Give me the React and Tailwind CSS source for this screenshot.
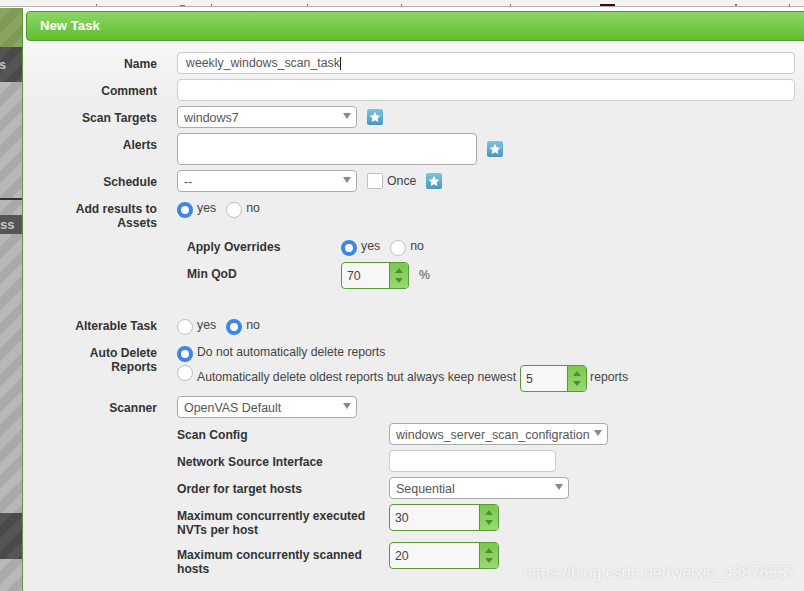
import React from 'react';

const font = { fontFamily: '"Liberation Sans", Arial, sans-serif' };

const hatchGray = 'bg-[repeating-linear-gradient(135deg,#b8b8b8_0px,#b8b8b8_9px,#aaaaaa_9px,#aaaaaa_18px)]';
const hatchDark = 'bg-[repeating-linear-gradient(135deg,#555555_0px,#555555_9px,#4a4a4a_9px,#4a4a4a_18px)]';

const Star = () => (
  <span className="flex h-4 w-4 shrink-0 items-center justify-center rounded-[2px] bg-gradient-to-b from-[#7cc5e2] to-[#4796c4]">
    <svg width="12" height="12" viewBox="0 0 24 24" fill="#ffffff">
      <path d="M12 1.5l3.3 6.9 7.5 1-5.5 5.2 1.4 7.5L12 18.4l-6.7 3.7 1.4-7.5L1.2 9.4l7.5-1z" />
    </svg>
  </span>
);

const Radio = ({ on }) => (
  on ? (
    <span className="block h-4 w-4 shrink-0 rounded-full border-[4.5px] border-[#3d86e6] bg-white" />
  ) : (
    <span className="block h-4 w-4 shrink-0 rounded-full border border-[#c4bfb8] bg-white" />
  )
);

const YesNo = ({ yes }) => (
  <div className="flex items-start text-[12.3px] leading-[18px] text-[#444]">
    <Radio on={yes} />
    <span className="ml-1 mt-[-3px]">yes</span>
    <span className="ml-[10px]"><Radio on={!yes} /></span>
    <span className="ml-1 mt-[-3px]">no</span>
  </div>
);

const Select = ({ value, width }) => (
  <div className={`flex h-[22px] items-center justify-between rounded-[4px] border border-[#aaaaaa] bg-white pl-[6px] pr-[5px] text-[12.45px] text-[#555] ${width}`}>
    <span className="pt-[2px]">{value}</span>
    <span className="mb-[2px] h-0 w-0 border-x-[4.5px] border-t-[6px] border-x-transparent border-t-[#888]" />
  </div>
);

const Spinner = ({ value, width }) => (
  <div className={`flex h-[27px] overflow-hidden rounded-[4px] border border-[#5a9a34] bg-[#f7f7f7] text-[12.3px] text-[#444] ${width}`}>
    <span className="flex flex-1 items-center pl-[5px] pt-[1px]">{value}</span>
    <div className="flex w-[19px] flex-col items-center justify-around border-l border-[#5a9a34] bg-gradient-to-b from-[#7ac850] to-[#9ad874] py-[3px]">
      <span className="h-0 w-0 border-x-[4px] border-b-[5px] border-x-transparent border-b-[#4f8f2d]" />
      <span className="h-0 w-0 border-x-[4px] border-t-[5px] border-x-transparent border-t-[#4f8f2d]" />
    </div>
  </div>
);

const Row = ({ label, children, className = 'mb-[5px]', labelClass = 'pt-[5px]' }) => (
  <div className={`flex ${className}`}>
    <div className={`w-[134px] shrink-0 pl-5 text-right text-[12.1px] font-bold leading-[14px] text-[#333] ${labelClass}`}>{label}</div>
    <div className="ml-5 flex-1">{children}</div>
  </div>
);

const SubRow = ({ label, children, labelClass = 'pt-[5px]' }) => (
  <div className="mb-[5px] flex">
    <div className={`w-[212px] shrink-0 pr-4 text-[12.1px] font-bold leading-[14px] text-[#333] ${labelClass}`}>{label}</div>
    <div>{children}</div>
  </div>
);

const App = () => {
  return (
    <div className="relative h-[591px] w-[804px] overflow-hidden bg-[#eeeeee]" style={font}>
      {/* browser strip above the dialog, text cut off */}
      <div className="flex h-[6px] items-end overflow-hidden bg-[#f5f4f2] pl-[96px]">
        <span className="h-[2px] w-[1px] bg-[#777]" />
        <span className="ml-[83px] h-[1px] w-[5px] bg-[#777]" />
        <span className="ml-[26px] h-[2px] w-[1px] bg-[#777]" />
        <span className="ml-[95px] h-[2px] w-[1px] bg-[#777]" />
        <span className="ml-[93px] h-[2px] w-[1px] bg-[#777]" />
        <span className="ml-[108px] h-[2px] w-[1px] bg-[#777]" />
        <span className="ml-[89px] h-[2px] w-[15px] bg-[#3a0a0a]" />
        <span className="ml-[120px] h-[2px] w-[2px] bg-[#777]" />
        <span className="ml-[52px] h-[2px] w-[1px] bg-[#777]" />
      </div>
      <div className="h-[1px] bg-[#b4b0ab]" />
      <div className="h-[1px] bg-white" />

      <div className="flex h-[583px]">
        {/* page behind the dialog */}
        <div className="flex w-[22px] shrink-0 flex-col text-[12px] font-bold text-[#c8c8c8]">
          <div className="h-[39px] bg-[repeating-linear-gradient(135deg,#8aa560_0px,#8aa560_9px,#7f9a56_9px,#7f9a56_18px)]" />
          <div className={`flex h-[35px] items-center justify-end overflow-hidden whitespace-nowrap pr-[16px] ${hatchDark}`}>s</div>
          <div className={`h-[116px] ${hatchGray}`} />
          <div className="h-[2px] bg-[#333]" />
          <div className={`h-[15px] ${hatchGray}`} />
          <div className="flex h-[19px] items-center overflow-hidden whitespace-pre bg-[#555] text-[13px]">ss  (</div>
          <div className={`h-[279px] ${hatchGray}`} />
          <div className={`h-[46px] ${hatchDark}`} />
          <div className={`flex-1 ${hatchGray}`} />
        </div>

        {/* dialog */}
        <div className="w-[1000px] shrink-0 border-l border-[#5a9e33] bg-white pl-[3px] pt-[3px]">
          <div className="flex h-[30px] items-center justify-between rounded-[4px] border border-[#4f9a2b] bg-gradient-to-b from-[#8dd666] to-[#60bd2b] pl-[13px] pr-[197px]">
            <span className="text-[13.2px] font-bold text-white">New Task</span>
            <span className="flex h-5 w-5 items-center justify-center rounded-[3px] border border-[#5e9f3e] bg-[#a3d78a]">
              <svg width="12" height="12" viewBox="0 0 12 12" fill="none" stroke="#4f8f2d" strokeWidth="2.6">
                <path d="M2 2l8 8M10 2l-8 8" />
              </svg>
            </span>
          </div>

          <div className="-ml-[3px] h-[560px] bg-[linear-gradient(#f8f8f8_0px,#eeeeee_60px)] pt-[11px]">
            <Row label="Name">
              <div className="flex h-[22px] w-[618px] items-center rounded-[4px] border border-[#cccccc] bg-white pl-2 pt-[1px] text-[12.3px] text-[#555]">
                weekly_windows_scan_task<span className="h-[13px] w-[1px] bg-[#222]" />
              </div>
            </Row>
            <Row label="Comment">
              <div className="h-[22px] w-[618px] rounded-[4px] border border-[#cccccc] bg-white" />
            </Row>
            <Row label="Scan Targets">
              <div className="flex items-center">
                <Select value="windows7" width="w-[180px]" />
                <span className="ml-[10px]"><Star /></span>
              </div>
            </Row>
            <Row label="Alerts">
              <div className="flex items-center">
                <div className="h-[32px] w-[300px] rounded-[4px] border border-[#aaaaaa] bg-white" />
                <span className="ml-[10px]"><Star /></span>
              </div>
            </Row>
            <Row label="Schedule" className="mb-[6px]">
              <div className="flex items-center">
                <Select value="--" width="w-[180px]" />
                <span className="ml-[10px] h-4 w-4 rounded-[2px] border border-[#c4bfb8] bg-white" />
                <span className="ml-1 text-[12.3px] text-[#444]">Once</span>
                <span className="ml-[10px]"><Star /></span>
              </div>
            </Row>
            <Row label="Add results to Assets" className="mb-[10px]" labelClass="pt-[4px]">
              <div className="pt-[4px]"><YesNo yes /></div>
            </Row>

            <div className="ml-[164px]">
              <div className="mb-[6px] flex">
                <div className="w-[154px] text-[12.1px] font-bold leading-[14px] text-[#333]">Apply Overrides</div>
                <YesNo yes />
              </div>
              <div className="flex">
                <div className="w-[154px] pt-[5px] text-[12.1px] font-bold leading-[14px] text-[#333]">Min QoD</div>
                <Spinner value="70" width="w-[68px]" />
                <span className="ml-[10px] pt-[4px] text-[12.3px] leading-[18px] text-[#555]">%</span>
              </div>
            </div>

            <Row label="Alterable Task" className="mb-[11px] mt-[30px]" labelClass="pt-0">
              <YesNo />
            </Row>
            <Row label="Auto Delete Reports" className="mb-[4px]" labelClass="pt-0">
              <div className="text-[12.2px] leading-[18px] text-[#444]">
                <div className="flex items-start">
                  <Radio on />
                  <span className="ml-1 mt-[-3px]">Do not automatically delete reports</span>
                </div>
                <div className="mt-[3px] flex items-start">
                  <Radio />
                  <span className="ml-1 mt-[3px]">Automatically delete oldest reports but always keep newest</span>
                  <span className="ml-[4px]"><Spinner value="5" width="w-[67px]" /></span>
                  <span className="ml-[3px] mt-[3px]">reports</span>
                </div>
              </div>
            </Row>
            <Row label="Scanner">
              <Select value="OpenVAS Default" width="w-[180px]" />
            </Row>

            <div className="ml-[154px]">
              <SubRow label="Scan Config">
                <Select value="windows_server_scan_configration" width="w-[219px]" />
              </SubRow>
              <SubRow label="Network Source Interface">
                <div className="h-[22px] w-[167px] rounded-[4px] border border-[#cccccc] bg-white" />
              </SubRow>
              <SubRow label="Order for target hosts">
                <Select value="Sequential" width="w-[180px]" />
              </SubRow>
              <SubRow label="Maximum concurrently executed NVTs per host">
                <Spinner value="30" width="w-[110px]" />
              </SubRow>
              <SubRow label="Maximum concurrently scanned hosts" labelClass="pt-[6px]">
                <Spinner value="20" width="w-[110px]" />
              </SubRow>
            </div>
          </div>
        </div>
      </div>

      {/* watermark over the page */}
      <span className="absolute left-[523px] top-[561px] text-[16px] text-white/80 [text-shadow:0_0_2px_#c4c4c4]">
        https://blog.csdn.net/weixin_43876557
      </span>
    </div>
  );
};

export default App;
